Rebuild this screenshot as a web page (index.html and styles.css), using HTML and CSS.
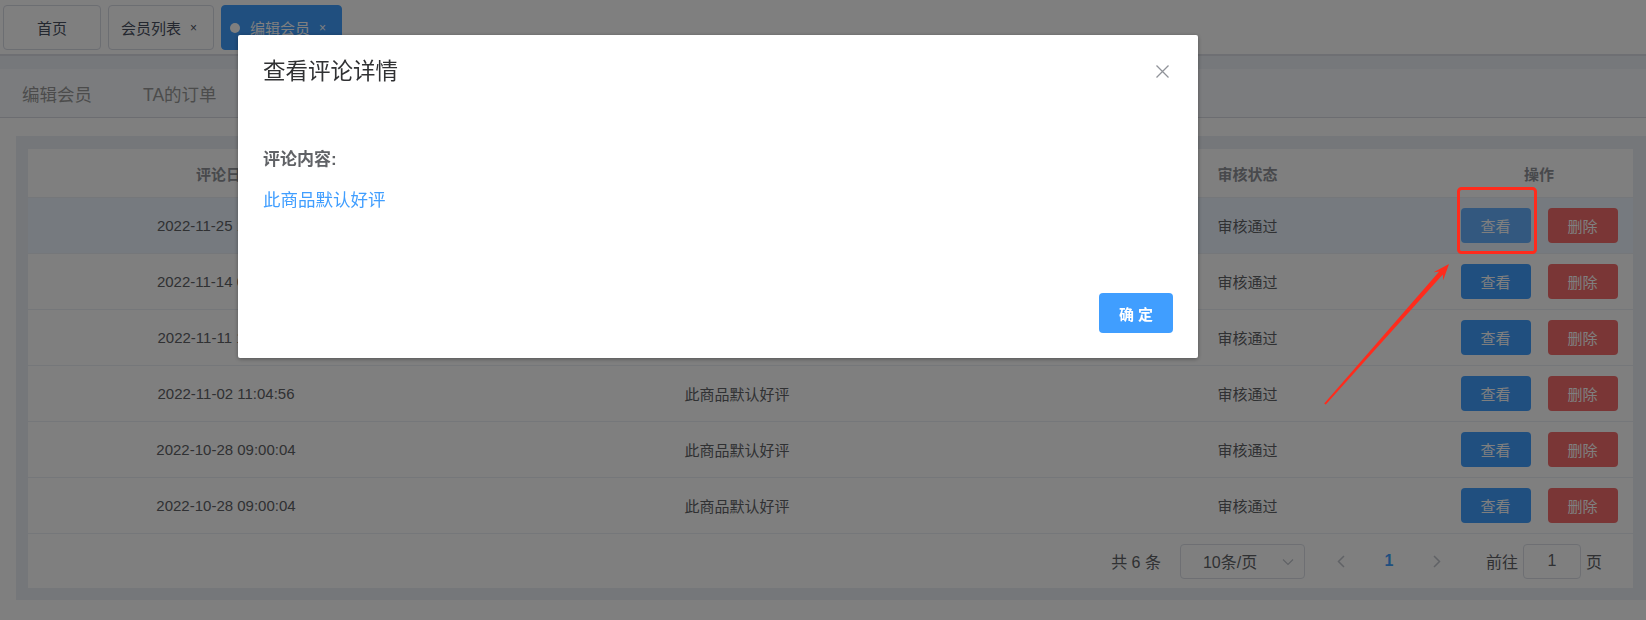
FILE: index.html
```html
<!DOCTYPE html>
<html lang="zh-CN">
<head>
  <meta charset="UTF-8" />
  <title>编辑会员</title>
  <link rel="stylesheet" href="styles.css">
</head>
<body>

  <div class="tags-bar">
    <span class="tag">首页</span>
    <span class="tag tag-close">会员列表 <i class="tag-x">×</i></span>
    <span class="tag tag-close active"><i class="tag-dot"></i>编辑会员 <i class="tag-x">×</i></span>
  </div>
  <div class="tags-shadow"></div>

  <div class="sub-nav">
    <span class="sub-item">编辑会员</span>
    <span class="sub-item">TA的订单</span>
  </div>

  <div class="card">
    <table class="grid">
      <colgroup>
        <col style="width:396px">
        <col style="width:626px">
        <col style="width:395px">
        <col style="width:188px">
      </colgroup>
      <thead>
        <tr>
          <th><div class="cell head">评论日期</div></th>
          <th><div class="cell head">评论内容</div></th>
          <th><div class="cell head">审核状态</div></th>
          <th><div class="cell head">操作</div></th>
        </tr>
      </thead>
      <tbody id="rows"></tbody>
    </table>

    <div class="pager">
      <span class="total">共 6 条</span>
      <span class="size-select">10条/页
        <svg class="chev" width="12" height="8" viewBox="0 0 12 8"><path d="M1 1.5 L6 6.5 L11 1.5" fill="none" stroke="#c0c4cc" stroke-width="1.2"/></svg>
      </span>
      <span class="pg-btn"><svg width="8" height="13" viewBox="0 0 8 13"><path d="M7 1 L1.5 6.5 L7 12" fill="none" stroke="#c0c4cc" stroke-width="1.5"/></svg></span>
      <span class="pg-btn pg-num">1</span>
      <span class="pg-btn"><svg width="8" height="13" viewBox="0 0 8 13"><path d="M1 1 L6.5 6.5 L1 12" fill="none" stroke="#c0c4cc" stroke-width="1.5"/></svg></span>
      <span class="jump">前往</span>
      <span class="jump-input">1</span>
      <span class="jump-tail">页</span>
    </div>
  </div>

  <div class="mask"></div>

  <div class="dialog-wrap">
    <div class="dialog">
      <div class="dialog-head">
        <span class="dialog-title">查看评论详情</span>
        <svg class="dialog-close" width="13" height="13" viewBox="0 0 13 13"><path d="M0.5 0.5 L12.5 12.5 M12.5 0.5 L0.5 12.5" stroke="#909399" stroke-width="1.3"/></svg>
      </div>
      <div class="dialog-body">
        <div class="label">评论内容:</div>
        <div class="content">此商品默认好评</div>
      </div>
      <div class="dialog-foot">
        <button class="btn-ok">确 定</button>
      </div>
    </div>
  </div>

  <!-- annotation drawn on the screenshot -->
  <svg class="mark" width="1646" height="620" viewBox="0 0 1646 620">
    <rect x="1458.5" y="188.5" width="77" height="64" rx="3" fill="none" stroke="#ff2b1c" stroke-width="3"/>
    <polygon fill="#ff2b1c" points="1324.2,403.4 1439.2,271.4 1433.6,272.2 1449,264 1443.2,280.2 1442.8,274.6 1325.8,404.6"/>
  </svg>

  <script>
    const comments = [
      { date: "2022-11-25 10:12:33", text: "此商品默认好评", state: "审核通过" },
      { date: "2022-11-14 09:40:18", text: "此商品默认好评", state: "审核通过" },
      { date: "2022-11-11 16:20:07", text: "此商品默认好评", state: "审核通过" },
      { date: "2022-11-02 11:04:56", text: "此商品默认好评", state: "审核通过" },
      { date: "2022-10-28 09:00:04", text: "此商品默认好评", state: "审核通过" },
      { date: "2022-10-28 09:00:04", text: "此商品默认好评", state: "审核通过" }
    ];

    const rowsElement = document.getElementById("rows");
    comments.forEach((item, i) => {
      const row = document.createElement("tr");
      if (i === 0) row.className = "current";
      row.innerHTML = `
        <td><div class="cell">${item.date}</div></td>
        <td><div class="cell">${item.text}</div></td>
        <td><div class="cell">${item.state}</div></td>
        <td><div class="cell ops">
          <button class="btn btn-view${i === 0 ? ' focus' : ''}">查看</button>
          <button class="btn btn-del">删除</button>
        </div></td>
      `;
      rowsElement.appendChild(row);
    });
  </script>

</body>
</html>
```

FILE: styles.css
```css
body {
  margin: 0;
  font-family: "Liberation Sans", "Noto Sans CJK SC", sans-serif;
  background: #fff;
  color: #606266;
  overflow: hidden;
}

i {
  font-style: normal;
}

/* top tags */
.tags-bar {
  height: 54px;
  box-sizing: border-box;
  padding: 5px 3px 0;
  display: flex;
  gap: 7px;
  background: #fff;
}

.tag {
  height: 45px;
  box-sizing: border-box;
  display: flex;
  align-items: center;
  padding: 0 33px;
  border: 1px solid #d8dce5;
  border-radius: 4px;
  font-size: 15px;
  color: #495060;
  background: #fff;
  white-space: nowrap;
}

.tag-close {
  padding: 0 16px 0 12px;
}

.tag-x {
  font-size: 12px;
  margin-left: 9px;
  color: #495060;
}

.tag.active {
  background: #409eff;
  border-color: #409eff;
  color: #fff;
  padding: 0 15px 0 8px;
}

.tag.active .tag-x {
  color: #fff;
}

.tag-dot {
  width: 10px;
  height: 10px;
  border-radius: 50%;
  background: #fff;
  margin-right: 10px;
}

.tags-shadow {
  height: 13px;
  border-top: 2px solid #dcdfe6;
  background: #ecf0f6;
}

/* sub nav */
.sub-nav {
  height: 48px;
  display: flex;
  align-items: center;
  gap: 51px;
  padding-left: 22px;
  background: #f7f9fc;
  border-bottom: 1px solid #d8dbe2;
}

.sub-item {
  font-size: 17.5px;
  color: #999;
}

/* card + table */
.card {
  margin: 18px 0 0 16px;
  padding: 13px 13px 12px 12px;
  background: #ebeef4;
}

.grid {
  width: 1605px;
  border-spacing: 0;
  table-layout: fixed;
  background: #fff;
}

.grid th,
.grid td {
  padding: 0;
  border-bottom: 1px solid #ebeef5;
}

.cell {
  height: 55px;
  display: flex;
  align-items: center;
  justify-content: center;
  font-size: 15px;
  color: #606266;
}

.cell.head {
  height: 48px;
  font-weight: bold;
  color: #909399;
}

.current td {
  background: #ecf5ff;
}

.ops {
  gap: 17px;
}

.btn {
  width: 70px;
  height: 35px;
  border: none;
  border-radius: 4px;
  color: #fff;
  font-family: inherit;
  font-size: 15px;
  padding: 0;
}

.btn-view {
  background: #409eff;
}

.btn-view.focus {
  background: #66b1ff;
}

.btn-del {
  background: #f56c6c;
}

/* pagination */
.pager {
  height: 54px;
  display: flex;
  align-items: center;
  justify-content: flex-end;
  padding-right: 31px;
  background: #fff;
  font-size: 16px;
  color: #606266;
}

.total {
  margin-right: 19px;
}

.size-select {
  width: 125px;
  height: 35px;
  box-sizing: border-box;
  border: 1px solid #dcdfe6;
  border-radius: 4px;
  display: flex;
  align-items: center;
  padding-left: 22px;
  position: relative;
  margin-right: 12px;
}

.chev {
  position: absolute;
  right: 10px;
  top: 13px;
}

.pg-btn {
  width: 48px;
  height: 35px;
  display: flex;
  align-items: center;
  justify-content: center;
}

.pg-num {
  color: #409eff;
  font-weight: bold;
}

.jump {
  margin-left: 25px;
  margin-right: 5px;
}

.jump-input {
  width: 58px;
  height: 35px;
  box-sizing: border-box;
  border: 1px solid #dcdfe6;
  border-radius: 4px;
  display: flex;
  align-items: center;
  justify-content: center;
}

.jump-tail {
  margin-left: 5px;
}

/* modal */
.mask {
  position: fixed;
  inset: 0;
  background: rgba(0, 0, 0, 0.5);
}

.dialog-wrap {
  position: fixed;
  inset: 0;
  padding: 35px 0 0 238px;
}

.dialog {
  width: 960px;
  box-sizing: border-box;
  padding: 25px;
  background: #fff;
  border-radius: 2px;
  box-shadow: 0 1px 4px rgba(0, 0, 0, 0.35);
}

.dialog-head {
  height: 24px;
  display: flex;
  justify-content: space-between;
  align-items: flex-start;
}

.dialog-title {
  font-size: 22.5px;
  line-height: 24px;
  color: #303133;
}

.dialog-close {
  margin-right: 4px;
  margin-top: 5px;
}

.dialog-body {
  margin-top: 64px;
}

.label {
  font-size: 17px;
  line-height: 24px;
  font-weight: bold;
  color: #606266;
}

.content {
  margin-top: 16px;
  font-size: 17.5px;
  line-height: 24px;
  color: #409eff;
}

.dialog-foot {
  margin-top: 81px;
  display: flex;
  justify-content: flex-end;
}

.btn-ok {
  width: 74px;
  height: 40px;
  border: none;
  border-radius: 4px;
  background: #409eff;
  color: #fff;
  font-family: inherit;
  font-size: 15px;
  font-weight: bold;
  padding: 0;
}

.mark {
  position: absolute;
  left: 0;
  top: 0;
  pointer-events: none;
}
```
